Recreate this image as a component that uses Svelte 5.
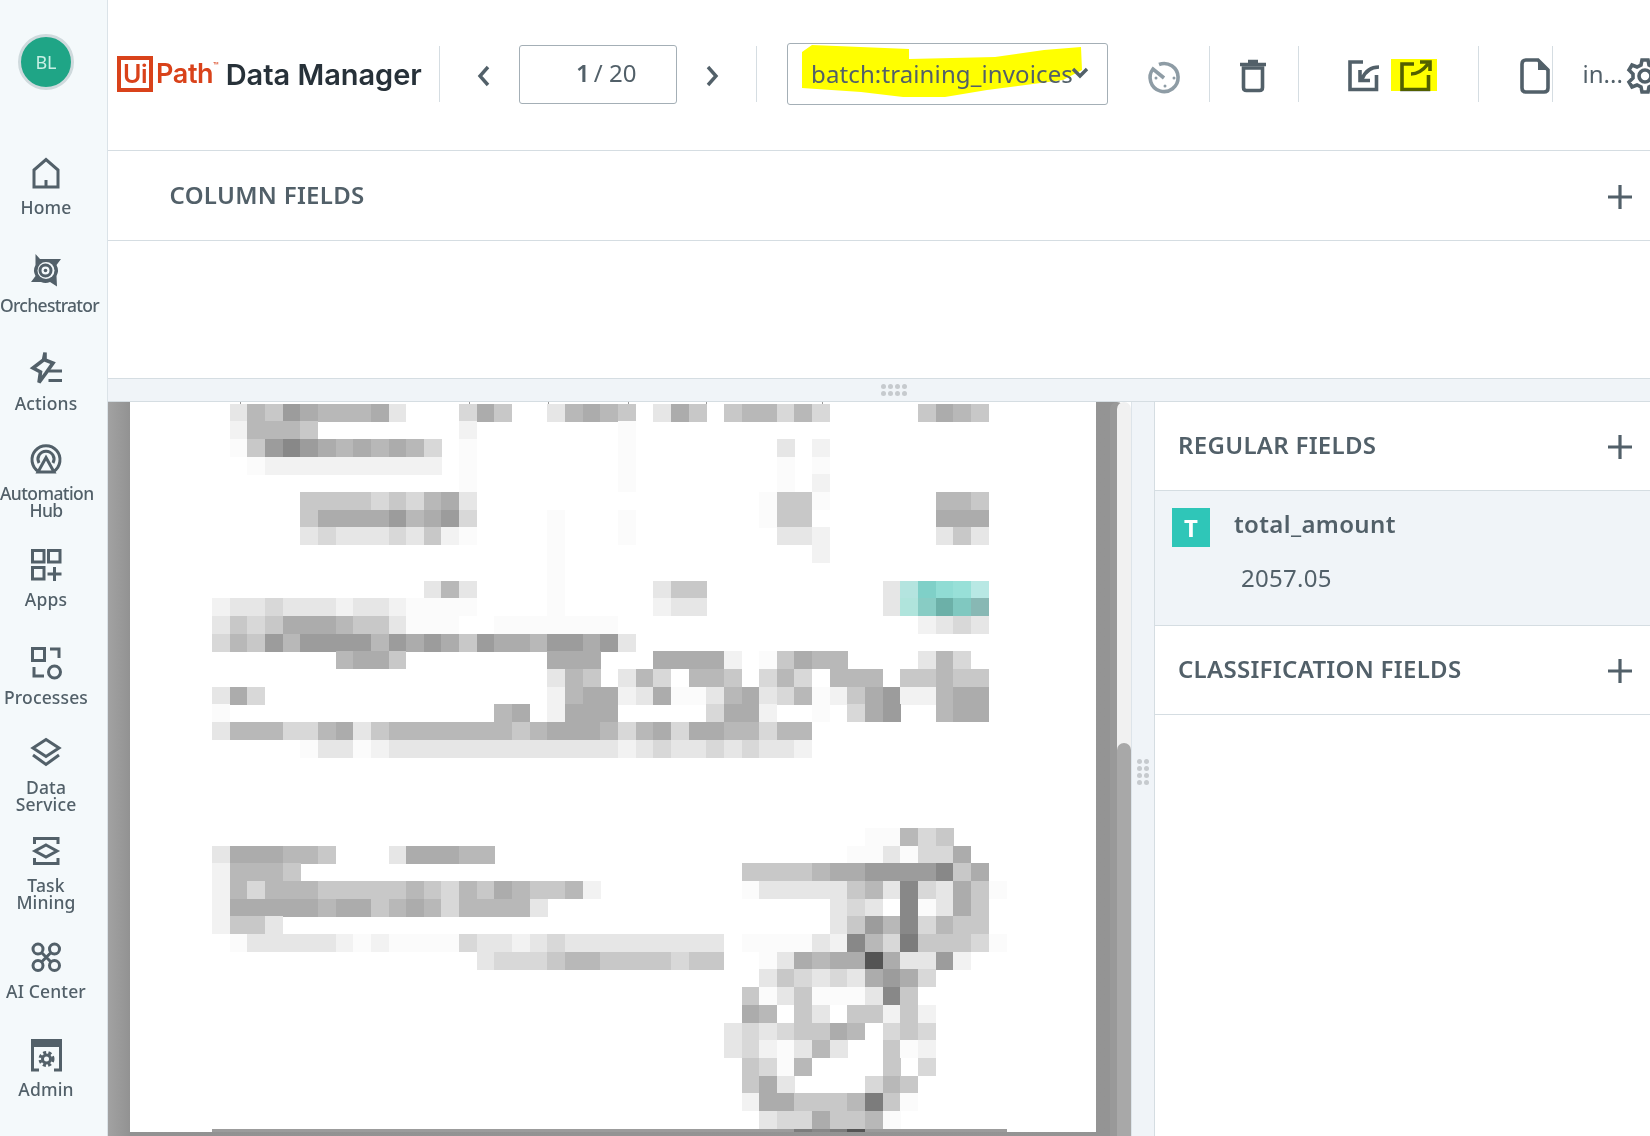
<script>
  const CW = 17.65, CH = 17.68, X0 = 82, Y0 = 1.7;
  const shade = { 5:'#545454',7:'#7c7c7c',8:'#888888',9:'#9c9c9c',a:'#acacac',b:'#b8b8b8',c:'#c8c8c8',d:'#d8d8d8',e:'#e6e6e6',f:'#f2f2f2',g:'#fbfbfb',
    p:'#b4e4df',q:'#7fd0c8',r:'#90dcd4',s:'#98e0d8',t:'#b8e8e4',u:'#b0e4dc',v:'#88ccc4',w:'#6cb0a8',x:'#80c8c0',y:'#88b8b4' };
  const rows = [
    '1:ebc9abbbae 14:dac 19:ebabc 25:eac 29:cbbdbd 40:cabc',
    '1:fbbbc 14:f 23:g',
    '1:gc989abababd 14:g 23:g 32:e 34:f',
    '2:gffffffffff 14:g 23:g 32:g 34:g',
    '14:g 23:g 32:g 34:f',
    '5:ccccdcdbae 31:gcc 34:g 41:bbc',
    '5:caaaa9ba9d 19:g 23:g 31:gcc 41:aaa',
    '5:edeeedecfg 19:g 23:g 32:eef 41:ece',
    '19:g 34:f',
    '19:g',
    '12:ebe 19:g 25:ecc 38:epqrst',
    '0:feedeeefeefgggg 19:g 25:fee 38:euvwxy',
    '0:ecdcaaabcce 11:ggg 16:ggggggg 40:fede',
    '0:dbc9b9999b9a9ac9aab99a9e',
    '7:baac 19:aaa 25:aaaaf 31:g 32:cabb 40:ebd',
    '19:ebc 23:ebd 27:bbc 31:dbd 35:bbb 39:ccbcc',
    '0:ead 19:fbaafea 26:ggebaedb 34:gfca9 39:ffbaa',
    '0:g 16:ba 19:faaa 28:daaf 34:g 36:da9 41:baa',
    '0:ebbbddbaecbbbbbbbcbaaabdbadaabbdbb',
    '5:geegfeeeeeeeeeeeeefedeededeef',
    '', '', '', '',
    '37:ggbdc',
    '0:eaaabbc 10:eaaabb 36:ggegdda',
    '0:fbbbc 30:ccccbaa99998ca',
    '0:fbdbbbcccccbcdbcabccbf 30:geeeeecbe8deacg',
    '0:faaaaabaacbabdbbbbe 35:ede.8geac',
    '0:fcce 35:ec9b8dbcc',
    '1:geeeeefgfggggdeefedeeeeeeeee 30:ggggef8bd7cccdg',
    '15:edddcbbccccdcc 31:geabaa5aee9f',
    '31:ecdedea9ad',
    '30:cgecggge8c',
    '30:ab.ce.ccfcf',
    '29:ededccab.dcd',
    '29:edfgebe..cgf',
    '30:cdgb....c.d',
    '30:cae....dbc',
    '30:faacccb7cg',
    '31:eddaccbg',
    '0:999999999999999999999999999999999787599999999'
  ];
  const cells = [];
  rows.forEach((row, r) => {
    row.split(' ').filter(Boolean).forEach((seg) => {
      const [start, chars] = seg.split(':');
      [...chars].forEach((ch, i) => {
        if (ch !== '.') cells.push({ x: X0 + (+start + i) * CW, y: Y0 + r * CH, fill: shade[ch] });
      });
    });
  });
  const ticks = [110, 339, 418, 498, 576, 692];

  const blob = '15,9 25,2 122,6 122,16 208,14 257,7 294,4 295,27 276,37 200,47 158,54 116,54 74,49 15,45';
</script>

<div class="app">
  <aside class="side">
    <div class="avatar-wrap"><div class="avatar">BL</div></div>

    <div class="nav-item">
      <svg class="nav-icon" viewBox="0 0 32 32"><path class="ln" d="M4 30V13L16 2.500 28 13V30Z"/><path class="fl" d="M14.500 23h3v7h-3z"/></svg>
      <span>Home</span>
    </div>
    <div class="nav-item">
      <svg class="nav-icon" viewBox="0 0 32 32"><path class="fl" d="M5.500 -1 10 4H31L26.500 10A11.500 11.500 0 0 1 26.500 21L27 31.500 20 27A11.500 11.500 0 0 1 11 27L1 27 5.500 21A11.500 11.500 0 0 1 5.500 10Z"/><circle class="hole" cx="16" cy="15.500" r="8.500"/><circle class="ln" cx="15.500" cy="15.500" r="5.500"/><circle class="fl" cx="15.500" cy="15.500" r="1.800"/></svg>
      <span class="tight">Orchestrator</span>
    </div>
    <div class="nav-item">
      <svg class="nav-icon" viewBox="0 0 32 32"><path class="ln thick" d="M15 -.5 13.500 7 3 15 10.500 19 9 29.500 16 20 23 10 15 7Z"/><path class="ln" d="M18.500 18H32M18.500 27.500H32"/></svg>
      <span>Actions</span>
    </div>
    <div class="nav-item">
      <svg class="nav-icon" viewBox="0 0 32 32"><path class="ln" d="M8.500 28.500A14 14 0 1 1 23.500 28.500"/><path class="ln" d="M9 20A8 8 0 1 1 23 20"/><path class="ln" d="M16 14.500 24 29H8Z"/></svg>
      <span class="tight auto">Automation<br/>Hub</span>
    </div>
    <div class="nav-item">
      <svg class="nav-icon" viewBox="0 0 32 32"><path class="ln" d="M2.500 1.500H14V13H2.500ZM18.500 1.500H30V13H18.500ZM2.500 18.500H14V30H2.500ZM24.500 18V32M17.500 25H31.500"/></svg>
      <span>Apps</span>
    </div>
    <div class="nav-item">
      <svg class="nav-icon" viewBox="0 0 32 32"><path class="ln" d="M2.500 1.500H14.500V13.500H2.500ZM20 2H29V11M4 20V29H14"/><circle class="ln" cx="24.500" cy="25" r="6"/></svg>
      <span>Processes</span>
    </div>
    <div class="nav-item">
      <svg class="nav-icon" viewBox="0 0 32 32"><path class="ln" d="M16 2.500 29 11 16 19.500 3 11ZM3 18 16 27.500 29 18"/></svg>
      <span>Data<br/>Service</span>
    </div>
    <div class="nav-item">
      <svg class="nav-icon" viewBox="0 0 32 32"><path class="ln" d="M4.500 9V3.500H28V9M4.500 23V28.500H28V23M16 10 27 16 16 22 5 16Z"/></svg>
      <span>Task<br/>Mining</span>
    </div>
    <div class="nav-item">
      <svg class="nav-icon" viewBox="0 0 32 32"><circle class="ln" cx="8" cy="8" r="5"/><circle class="ln" cx="24.500" cy="8" r="5"/><circle class="ln" cx="8" cy="24.500" r="5"/><circle class="ln" cx="24.500" cy="24.500" r="5"/><path class="ln" d="M12 12 20.500 20.500M20.500 12 12 20.500"/></svg>
      <span>AI Center</span>
    </div>
    <div class="nav-item">
      <svg class="nav-icon" viewBox="0 0 32 32"><path class="fl" d="M1 0H32V8H1Z"/><path class="ln" d="M2.500 7V31H9M30.500 7V31H24"/><circle class="ln" cx="16.500" cy="20" r="4"/><circle class="fl-ring" cx="16.500" cy="20" r="6.500"/></svg>
      <span>Admin</span>
    </div>
  </aside>

  <main class="main">
    <header class="toolbar">
      <div class="brand">
        <span class="ui-box">Ui</span><span class="path-word">Path</span><sup class="tm">™</sup>
        <span class="brand-name">Data Manager</span>
      </div>
      <i class="sep"></i>
      <svg class="chev prev" viewBox="0 0 16 24"><path d="M12 3 4 12 12 21"/></svg>
      <div class="pager"><b>1</b>/ 20</div>
      <svg class="chev next" viewBox="0 0 16 24"><path d="M4 3 12 12 4 21"/></svg>
      <i class="sep sep-b"></i>
      <div class="select">
        <svg class="blob" viewBox="0 0 321 61"><polygon points={blob}/></svg>
        <span class="select-text">batch:training_invoices</span>
        <svg class="select-chev" viewBox="0 0 18 12"><path d="M2 2 9 9 16 2"/></svg>
      </div>
      <svg class="tool timer" viewBox="0 0 34 34"><path d="M11 5.500A14 14 0 1 1 5 10L16 19"/><circle cx="8" cy="19" r="1.500"/><circle cx="26" cy="19" r="1.500"/><circle cx="17" cy="27" r="1.500"/></svg>
      <i class="sep sep-c"></i>
      <svg class="tool trash" viewBox="0 0 26 34"><path d="M3.500 9V28.500Q3.500 31.500 6.500 31.500H19.500Q22.500 31.500 22.500 28.500V9Z"/><path d="M0 5.500H26M8 2.500H18"/></svg>
      <i class="sep sep-d"></i>
      <svg class="tool import" viewBox="0 0 32 32"><path d="M15 2H2V29.500H28.500V15"/><path d="M31 7Q19 7 14 19M12 10V20.500H22"/></svg>
      <span class="mark">
        <i class="mark-bg"></i>
        <svg class="tool export" viewBox="0 0 32 32"><path d="M14 4H2V29.500H28.500V15"/><path d="M11 14Q20 14 28 4M20 2H30V11"/></svg>
      </span>
      <i class="sep sep-e"></i>
      <svg class="tool file" viewBox="0 0 30 36"><path d="M18 2H6Q2 2 2 6V30Q2 34 6 34H24Q28 34 28 30V12Z"/><path class="solid" d="M18 2 28 12H18Z"/></svg>
      <i class="sep sep-f"></i>
      <span class="more">in...</span>
      <svg class="tool gear" viewBox="0 0 36 36"><circle cx="18" cy="18" r="6"/><path d="M15 2H21L22 7 26 9 31 7 34 12 30 16V20L34 24 31 29 26 27 22 29 21 34H15L14 29 10 27 5 29 2 24 6 20V16L2 12 5 7 10 9 14 7Z"/></svg>
    </header>

    <section class="fields-head column-head">
      <h2>COLUMN FIELDS</h2>
      <svg class="plus" viewBox="0 0 26 26"><path d="M13 1V25M1 13H25"/></svg>
    </section>
    <div class="blank"></div>
    <div class="h-split"><div class="dots dots-h">{#each Array(8) as _}<i></i>{/each}</div></div>

    <div class="work">
      <div class="viewer">
        <div class="page">
          <svg class="mosaic" viewBox="0 0 966 730" shape-rendering="crispEdges">
            {#each ticks as x}<rect {x} y="0" width="1" height="2" fill="#999"/>{/each}
            {#each cells as c}
              <rect x={c.x} y={c.y} width={CW + 0.3} height={CH + 0.3} fill={c.fill}/>
            {/each}
          </svg>
        </div>
      </div>
      <div class="scroll"><div class="thumb"></div></div>
      <div class="v-split"><div class="dots dots-v">{#each Array(8) as _}<i></i>{/each}</div></div>
      <div class="panel">
        <section class="fields-head panel-head">
          <h2>REGULAR FIELDS</h2>
          <svg class="plus" viewBox="0 0 26 26"><path d="M13 1V25M1 13H25"/></svg>
        </section>
        <div class="field">
          <div class="field-top">
            <span class="badge">T</span>
            <span class="field-name">total_amount</span>
          </div>
          <div class="field-value">2057.05</div>
        </div>
        <section class="fields-head panel-head">
          <h2>CLASSIFICATION FIELDS</h2>
          <svg class="plus" viewBox="0 0 26 26"><path d="M13 1V25M1 13H25"/></svg>
        </section>
      </div>
    </div>
  </main>
</div>

<style>
  :global(body) { margin: 0; background: #fff; }
  .app {
    display: flex; width: 1650px; height: 1136px; overflow: hidden;
    font-family: "Noto Sans", "Open Sans", sans-serif; color: #526069;
  }
  .side {
    flex: 0 0 107px; box-sizing: border-box; padding-right: 15px;
    background: #f4f9fb; border-right: 1px solid #dbe3e8;
  }
  .avatar-wrap { height: 137.500px; padding-top: 34px; box-sizing: border-box; display: flex; justify-content: center; }
  .avatar {
    width: 50px; height: 50px; border-radius: 50%; background: #1fa586; border: 3px solid #cfdadd;
    color: #c8efe4; font-size: 18px; line-height: 50px; text-align: center;
  }
  .nav-item {
    height: 98px; width: 92px; display: flex; flex-direction: column; align-items: center; justify-content: center;
    font-size: 17.500px; line-height: 17px; text-align: center; font-weight: 500; letter-spacing: .15px;
  }
  .nav-item span { margin-top: 10px; white-space: nowrap; width: 92px; }
  .nav-item .tight { letter-spacing: -.7px; }
  .nav-item .auto { letter-spacing: -.6px; }
  .nav-icon { width: 32px; height: 32px; overflow: visible; flex: none; }
  .ln { fill: none; stroke: #526069; stroke-width: 3; }
  .thick { stroke-width: 3.600; stroke-linejoin: miter; }
  .fl { fill: #526069; }
  .hole { fill: #f4f9fb; }
  .fl-ring { fill: none; stroke: #526069; stroke-width: 3; stroke-dasharray: 3 2.300; }

  .main { flex: 1; min-width: 0; display: flex; flex-direction: column; }
  .toolbar {
    flex: 0 0 151px; box-sizing: border-box; border-bottom: 1px solid #d5dde2; padding-bottom: 2px;
    display: flex; align-items: center; overflow: hidden; white-space: nowrap;
  }
  .brand { margin-left: 9px; width: 322px; flex: none; display: flex; align-items: center; color: #d9421a; }
  .ui-box {
    box-sizing: border-box; width: 36px; height: 36px; border: 4px solid #d9421a;
    font: 600 25px/28px Inter, sans-serif; text-align: center; letter-spacing: -.5px;
  }
  .path-word { margin-left: 3px; font: 600 27px/36px Inter, sans-serif; letter-spacing: -.4px; }
  .tm { font: 400 7px/1 "Noto Sans", sans-serif; align-self: flex-start; margin-top: 6px; }
  .brand-name { margin-left: 7px; margin-top: 2px; color: #273139; font: 600 29px/36px Inter, sans-serif; letter-spacing: -.03px; }
  .sep { flex: none; width: 1px; height: 56px; background: #d5dde2; }
  .chev { flex: none; width: 16px; height: 24px; fill: none; stroke: #526069; stroke-width: 3.400; margin-top: 3px; }
  .prev { margin-left: 36px; }
  .pager {
    flex: none; box-sizing: border-box; margin-left: 27px; width: 158px; height: 59px; border: 1px solid #a4afb6; border-radius: 3px;
    font-size: 24px; line-height: 54px; padding-left: 56px;
  }
  .pager b { font-weight: 600; margin-right: 4px; }
  .next { margin-left: 27px; }
  .sep-b { margin-left: 36px; }
  .select {
    flex: none; position: relative; box-sizing: border-box; margin-left: 30px; width: 321px; height: 62px;
    border: 1px solid #a4afb6; border-radius: 3px; font-size: 24px; line-height: 60px; padding-left: 23px; letter-spacing: .12px;
  }
  .select-text { position: relative; }
  .blob { position: absolute; left: -1px; top: -1px; width: 321px; height: 61px; mix-blend-mode: multiply; }
  .blob polygon { fill: #ffff00; }
  .select-chev {
    position: absolute; left: 283px; top: 23px; width: 18px; height: 12px;
    fill: none; stroke: #526069; stroke-width: 3.400;
  }
  .tool { flex: none; overflow: visible; fill: none; stroke: #526069; stroke-width: 3.600; margin-top: 3px; }
  .timer { margin-left: 40px; width: 34px; height: 34px; stroke: #8e9ca5; }
  .timer circle { fill: #8e9ca5; stroke: none; }
  .sep-c { margin-left: 26.500px; }
  .trash { margin-left: 30px; width: 26px; height: 34px; }
  .sep-d { margin-left: 32px; }
  .import { margin-left: 49px; width: 32px; height: 32px; }
  .mark { position: relative; flex: none; margin-left: 20px; width: 32px; height: 32px; margin-top: 3px; }
  .mark-bg {
    position: absolute; left: -9px; top: -1px; width: 46px; height: 32px; background: #ffff00;
  }
  .export { position: relative; width: 32px; height: 32px; display: block; mix-blend-mode: multiply; margin-top: 0; }
  .sep-e { margin-left: 46px; }
  .file { margin-left: 41px; width: 30px; height: 36px; }
  .solid { fill: #526069; stroke: none; }
  .sep-f { margin-left: 2px; }
  .more { flex: none; margin-left: 30px; font-size: 24px; margin-top: -2px; }
  .gear { margin-left: 4px; width: 36px; height: 36px; }

  .fields-head {
    display: flex; align-items: center; justify-content: space-between; box-sizing: border-box;
    border-bottom: 1px solid #d5dde2;
  }
  .fields-head h2 { margin: -3px 0 0; font-size: 24px; font-weight: 600; color: #526069; letter-spacing: .3px; }
  .plus { flex: none; width: 26px; height: 26px; fill: none; stroke: #526069; stroke-width: 3.200; margin: 2px 17px 0 0; }
  .column-head { flex: 0 0 90px; padding-left: 61.500px; }
  .blank { flex: 0 0 137px; }
  .h-split {
    flex: 0 0 24px; box-sizing: border-box; background: #f0f4f8;
    border-top: 1px solid #d5dde2; border-bottom: 1px solid #d5dde2;
    display: flex; align-items: center; justify-content: center; padding-left: 29px;
  }
  .dots { display: grid; gap: 2px; }
  .dots i { width: 5px; height: 5px; border-radius: 50%; background: #c6cace; }
  .dots-h { grid-template-columns: repeat(4, 5px); }
  .dots-v { grid-template-columns: repeat(2, 5px); }

  .work { flex: 1; min-height: 0; display: flex; }
  .viewer { flex: 0 0 1009px; box-sizing: border-box; padding-left: 22px; background: linear-gradient(90deg, #a2a2a2, #929292 22px, #949494); overflow: hidden; }
  .page { width: 966px; height: 730px; background: #fff; }
  .mosaic { display: block; width: 966px; height: 730px; }
  .scroll { flex: 0 0 14px; position: relative; background: #f1f1f1; border-radius: 7px 7px 0 0; box-shadow: -7px 0 0 #999; }
  .thumb { position: absolute; left: 0; right: 0; top: 341px; bottom: 0; background: #a8a8a8; border-radius: 7px 7px 0 0; }
  .v-split {
    flex: 0 0 24px; box-sizing: border-box; background: #f0f4f8; border-right: 1px solid #d5dde2; border-left: 1px solid #dde4ea;
    display: flex; justify-content: center; padding-top: 357px;
  }
  .dots-v { align-self: flex-start; }
  .panel { flex: 1; min-width: 0; }
  .panel-head { height: 89px; padding-left: 23px; }
  .field { box-sizing: border-box; height: 135px; background: #f0f4f8; border-bottom: 1px solid #d5dde2; padding: 17px 0 0 17px; }
  .field-top { display: flex; align-items: flex-start; }
  .badge {
    flex: none; width: 38px; height: 39px; background: #2fc6b8; color: #fff;
    font-size: 24px; font-weight: 700; line-height: 39px; text-align: center;
  }
  .field-name { margin-left: 24px; font-size: 24px; font-weight: 600; line-height: 32px; letter-spacing: .35px; }
  .field-value { margin: 15px 0 0 69px; font-size: 24px; line-height: 32px; letter-spacing: .3px; }
</style>
